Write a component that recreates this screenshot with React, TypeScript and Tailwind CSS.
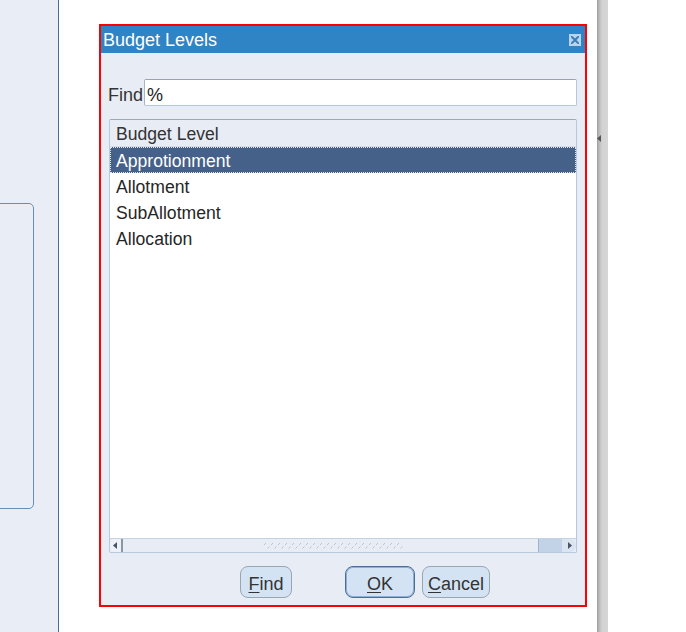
import React from "react";

const font = { fontFamily: '"Liberation Sans", Arial, sans-serif' };

function Btn({ label, u, w, def }: { label: string; u: number; w: number; def?: boolean }) {
  return (
    <div
      className={`h-[32px] rounded-[8px] flex items-center justify-center pt-[3px] leading-none text-[18px] text-[#333] bg-[#d3e3f3] border ${def ? "border-[#4d6d96] shadow-[inset_0_0_0_1px_#8fb0d6]" : "border-[#9aa5b2]"}`}
      style={{ width: w }}
    >
      <span>
        {label.slice(0, u)}
        <span className="underline underline-offset-2">{label[u]}</span>
        {label.slice(u + 1)}
      </span>
    </div>
  );
}

export default function App() {
  const rows = ["Allotment", "SubAllotment", "Allocation"];
  return (
    <div className="w-[686px] h-[632px] flex bg-white overflow-hidden" style={font}>
      {/* left panel */}
      <div className="w-[59px] h-full bg-[#e9eef6] border-r border-[#4a6a9a] pt-[203px]">
        <div className="ml-[-10px] w-[44px] h-[306px] border border-[#6d8db0] rounded-[5px]" />
      </div>
      {/* main white area */}
      <div className="w-[538px] h-full pl-[40px] pt-[24px]">
        <div className="w-[488px] h-[583px] border-2 border-[#ff0000] bg-[#e8edf5] flex flex-col">
          <div className="h-[27px] shrink-0 bg-[#2e84c4] flex items-center justify-between pl-[2px] pr-[4px]">
            <span className="text-white text-[18px] leading-none">Budget Levels</span>
            <div className="w-[12px] h-[12px] bg-[#b9d4ec] flex items-center justify-center">
              <svg width="10" height="10" viewBox="0 0 10 10">
                <path d="M2 2 L8 8 M8 2 L2 8" stroke="#3b7dbb" strokeWidth="2" />
                <path d="M1 1 L3 1 L1 3 Z M9 1 L7 1 L9 3 Z M1 9 L3 9 L1 7 Z M9 9 L7 9 L9 7 Z" fill="#3b7dbb" />
              </svg>
            </div>
          </div>
          <div className="h-[27px] shrink-0 flex pl-[7px] pr-[8px] mt-[26px]">
            <div className="h-[27px] w-[36px] flex items-center pt-[4px] leading-none text-[18px] text-[#333]">Find</div>
            <div className="flex-1 h-[27px] bg-white border border-[#b8c8dc] border-t-[#9aa4ae] border-l-[#a8b4c2] rounded-[2px] flex items-center pl-[2px] pt-[4px] leading-none text-[18px] text-[#222]">
              %
            </div>
          </div>
          <div className="ml-[8px] mt-[13px] w-[468px] h-[434px] shrink-0 bg-white border border-[#b9c9dc] border-t-[#a0a8b2] rounded-[2px] flex flex-col">
            <div className="h-[27px] bg-[#e8edf5] flex items-center pl-[6px] pt-[2px] text-[17.6px] text-[#333] border-b border-[#d6dde6]">
              Budget Level
            </div>
            <div className="h-[26px] bg-[#466189] flex items-center pl-[5px] pt-[2px] text-[17.6px] text-white border border-dotted border-[#dfe6f0]">
              Approtionment
            </div>
            {rows.map((r) => (
              <div key={r} className="h-[26px] flex items-center pl-[6px] pt-[2px] text-[17.6px] text-[#262626]">
                {r}
              </div>
            ))}
            <div className="flex-1" />
            <div className="h-[14px] flex items-stretch bg-[#e8edf5] border-t border-[#c5d2e2]">
              <div className="w-[13px] rounded-l-[6px] border-r-2 border-[#8b96a3] bg-[#eef2f8] flex items-center justify-center">
                <svg width="5" height="7" viewBox="0 0 5 7"><path d="M4 0 L0 3.5 L4 7 Z" fill="#4a5563" /></svg>
              </div>
              <div className="flex-1 flex items-center pl-[140px]">
                <svg width="140" height="7" viewBox="0 0 140 7">
                  <defs>
                    <pattern id="grip" width="7" height="7" patternUnits="userSpaceOnUse">
                      <path d="M1 3 L3 1 M4.5 6.5 L6.5 4.5" stroke="#b8c4d2" strokeWidth="1" />
                    </pattern>
                  </defs>
                  <rect width="140" height="7" fill="url(#grip)" />
                </svg>
              </div>
              <div className="w-[24px] bg-[#c2d3e8] border-l border-[#9fb3cc]" />
              <div className="w-[14px] rounded-r-[6px] bg-[#dbe5f1] flex items-center justify-center">
                <svg width="5" height="7" viewBox="0 0 5 7"><path d="M1 0 L5 3.5 L1 7 Z" fill="#4a5563" /></svg>
              </div>
            </div>
          </div>
          <div className="flex mt-[13px] pl-[139px]">
            <Btn label="Find" u={0} w={52} />
            <div className="w-[53px]" />
            <Btn label="OK" u={0} w={70} def />
            <div className="w-[7px]" />
            <Btn label="Cancel" u={0} w={68} />
          </div>
        </div>
      </div>
      {/* gray bar */}
      <div className="w-[11px] h-full bg-[linear-gradient(90deg,#9e9e9e_0px,#b8b8b8_2px,#d2d2d2_5px,#d6d6d6_11px)] flex flex-col pt-[135px]">
        <svg width="4" height="7" viewBox="0 0 4 7"><path d="M0 3.5 L4 0 L4 7 Z" fill="#555" /></svg>
      </div>
      <div className="flex-1 bg-white" />
    </div>
  );
}
